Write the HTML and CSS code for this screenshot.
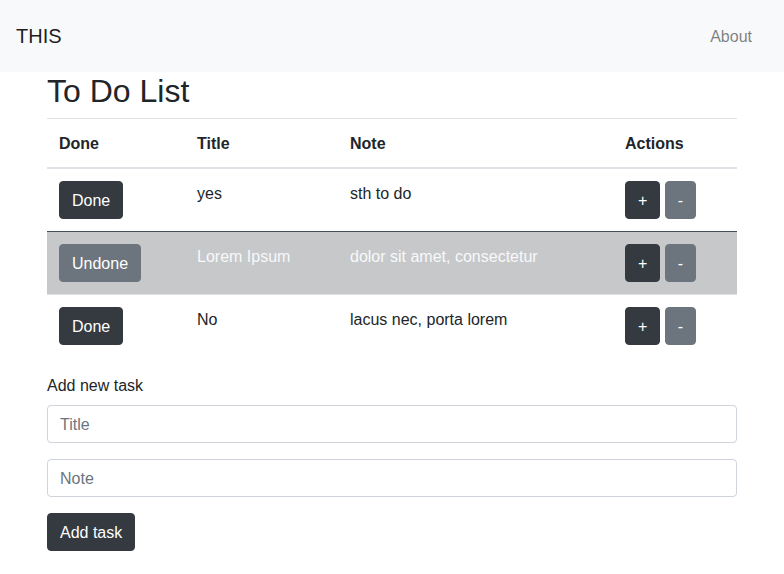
FILE: index.html
```html
<!DOCTYPE html>
<html lang="en">
<head>
<meta charset="utf-8">
<title>To Do List</title>
<link rel="stylesheet" href="styles.css">
</head>
<body>
<nav class="navbar">
  <a class="brand" href="#">THIS</a>
  <a class="nav-link" href="#">About</a>
</nav>
<main class="container">
  <h2 class="page-title">To Do List</h2>
  <table class="todo-table">
    <colgroup>
      <col class="col-done"><col class="col-title"><col class="col-note"><col class="col-actions">
    </colgroup>
    <thead>
      <tr><th>Done</th><th>Title</th><th>Note</th><th>Actions</th></tr>
    </thead>
    <tbody>
      <tr>
        <td><button class="btn btn-dark">Done</button></td>
        <td class="text-cell">yes</td>
        <td class="text-cell">sth to do</td>
        <td><button class="btn btn-dark">+</button> <button class="btn btn-secondary">-</button></td>
      </tr>
      <tr class="row-done">
        <td><button class="btn btn-secondary">Undone</button></td>
        <td class="text-cell">Lorem Ipsum</td>
        <td class="text-cell">dolor sit amet, consectetur</td>
        <td><button class="btn btn-dark">+</button> <button class="btn btn-secondary">-</button></td>
      </tr>
      <tr>
        <td><button class="btn btn-dark">Done</button></td>
        <td class="text-cell">No</td>
        <td class="text-cell">lacus nec, porta lorem</td>
        <td><button class="btn btn-dark">+</button> <button class="btn btn-secondary">-</button></td>
      </tr>
    </tbody>
  </table>
  <form class="task-form">
    <div class="form-group">
      <label class="form-label" for="title">Add new task</label>
      <input class="form-control" id="title" type="text" placeholder="Title">
    </div>
    <div class="form-group">
      <input class="form-control" id="note" type="text" placeholder="Note">
    </div>
    <button class="btn btn-dark" type="button">Add task</button>
  </form>
</main>
</body>
</html>
```
FILE: styles.css
```css
* { box-sizing: border-box; }
html, body { margin: 0; }
body {
  font-family: "Liberation Sans", Arial, sans-serif;
  font-size: 16px;
  line-height: 1.5;
  color: #212529;
  background: #fff;
}
a { text-decoration: none; }

.navbar {
  display: flex;
  justify-content: space-between;
  align-items: center;
  padding: 16px;
  background: #f8f9fa;
  height: 72px;
}
.brand {
  font-size: 20px;
  line-height: 30px;
  padding: 5px 0;
  color: rgba(0,0,0,.9);
}
.nav-link {
  color: rgba(0,0,0,.5);
  padding: 9px 16px 7px 8px;
}

.container {
  max-width: 720px;
  margin: 0 auto;
  padding: 0 15px;
}
.page-title {
  font-size: 32px;
  font-weight: 400;
  line-height: 1.2;
  margin: 0 0 8px;
}

.todo-table {
  width: 100%;
  border-collapse: collapse;
  margin-bottom: 17px;
}
.col-done { width: 138px; }
.col-title { width: 153px; }
.col-note { width: 275px; }
.col-actions { width: 124px; }
.todo-table th, .todo-table td {
  padding: 13px 12px 11px;
  text-align: left;
  vertical-align: top;
  border-top: 1px solid #dee2e6;
}
.todo-table td { padding: 12px; }
.todo-table td.text-cell { padding: 13px 12px 11px; }
.todo-table th {
  font-weight: 700;
  border-bottom: 2px solid #dee2e6;
}
.todo-table tbody tr:first-child td { border-top: 0; }
.row-done td {
  background: #c6c8ca;
  color: #f8f9fa;
}
.todo-table tbody .row-done td { border-top: 1px solid #454d55; }

.btn {
  display: inline-block;
  font-family: inherit;
  font-size: 16px;
  line-height: 24px;
  padding: 7px 12px 5px;
  border: 1px solid transparent;
  border-radius: 4px;
  color: #fff;
  cursor: pointer;
  vertical-align: middle;
}
.btn-dark { background: #343a40; border-color: #343a40; }
.btn-secondary { background: #6c757d; border-color: #6c757d; }

.form-group { margin-bottom: 16px; }
.form-label {
  display: inline-block;
  margin-bottom: 7px;
}
.form-control {
  display: block;
  width: 100%;
  height: 38px;
  padding: 7px 12px 5px;
  font-family: inherit;
  font-size: 16px;
  line-height: 24px;
  color: #495057;
  background: #fff;
  border: 1px solid #ced4da;
  border-radius: 4px;
}
.form-control::placeholder { color: #6c757d; opacity: 1; }
```
